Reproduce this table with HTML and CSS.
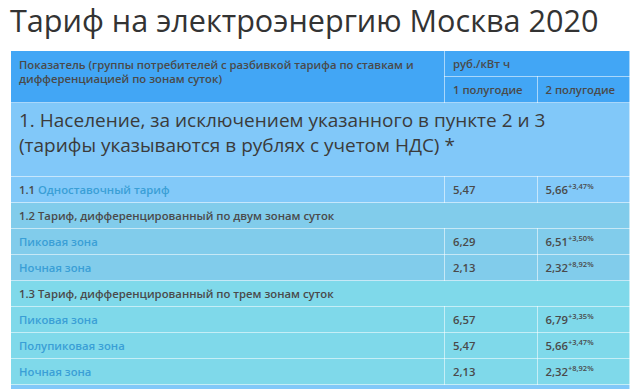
FILE: index.html
```html
<!DOCTYPE html>
<html lang="ru">
<head>
<meta charset="utf-8">
<link rel="stylesheet" href="styles.css">
</head>
<body>
<h1 class="title">Тариф на электроэнергию Москва 2020</h1>
<table class="tariff">
  <thead>
    <tr class="head">
      <th rowspan="2" class="c1">Показатель (группы потребителей с разбивкой тарифа по ставкам и дифференциацией по зонам суток)</th>
      <th colspan="2">руб./кВт ч</th>
    </tr>
    <tr class="head">
      <th class="c2">1 полугодие</th>
      <th class="c3">2 полугодие</th>
    </tr>
  </thead>
  <tbody>
    <tr class="sec">
      <td colspan="3">1. Население, за исключением указанного в пункте 2 и 3 (тарифы указываются в рублях с учетом НДС) *</td>
    </tr>
    <tr class="g1">
      <td><b>1.1</b> <a class="lnk">Одноставочный тариф</a></td>
      <td>5,47</td>
      <td>5,66<sup>+3,47%</sup></td>
    </tr>
    <tr class="g2">
      <td colspan="3"><b>1.2 Тариф, дифференцированный по двум зонам суток</b></td>
    </tr>
    <tr class="g2">
      <td><a class="lnk">Пиковая зона</a></td>
      <td>6,29</td>
      <td>6,51<sup>+3,50%</sup></td>
    </tr>
    <tr class="g2">
      <td><a class="lnk">Ночная зона</a></td>
      <td>2,13</td>
      <td>2,32<sup>+8,92%</sup></td>
    </tr>
    <tr class="g3">
      <td colspan="3"><b>1.3 Тариф, дифференцированный по трем зонам суток</b></td>
    </tr>
    <tr class="g3">
      <td><a class="lnk">Пиковая зона</a></td>
      <td>6,57</td>
      <td>6,79<sup>+3,35%</sup></td>
    </tr>
    <tr class="g3">
      <td><a class="lnk">Полупиковая зона</a></td>
      <td>5,47</td>
      <td>5,66<sup>+3,47%</sup></td>
    </tr>
    <tr class="g3">
      <td><a class="lnk">Ночная зона</a></td>
      <td>2,13</td>
      <td>2,32<sup>+8,92%</sup></td>
    </tr>
    <tr class="sec2">
      <td colspan="3"></td>
    </tr>
  </tbody>
</table>
</body>
</html>
```

FILE: styles.css
```css
html, body {
  margin: 0;
  padding: 0;
  background: #fff;
}
body {
  font-family: "Open Sans", "DejaVu Sans", sans-serif;
  color: #444;
  padding: 0 10px;
  overflow: hidden;
  height: 389px;
}
.title {
  font-size: 30.6px;
  font-weight: 400;
  color: #333;
  margin: 0;
  line-height: 40px;
  height: 50px;
}
.tariff {
  width: 620px;
  border-collapse: collapse;
  font-size: 11.3px;
  table-layout: fixed;
}
.tariff th, .tariff td {
  border: 1px solid rgba(255,255,255,0.55);
  padding: 6px 8px;
  line-height: 13px;
  text-align: left;
  vertical-align: top;
  font-weight: 600;
  color: #4a4a4a;
}
.tariff .c1 { width: 417px; padding-top: 7px; line-height: 14px; }
.tariff .c2 { width: 77px; }
.head th {
  background: #42a6f5;
}
.sec td {
  background: #81c8f9;
  font-size: 19px;
  font-weight: 400;
  line-height: 25px;
  color: #3b3b3b;
  padding: 5px 8px 18px;
}
.g1 td { background: #82c9f9; }
.g2 td { background: #81cceb; }
.g3 td { background: #7fd9ea; }
.sec2 td { background: #81c8f9; height: 30px; }
.tariff b { font-weight: 600; }
.lnk {
  color: #3a9fd6;
  text-decoration: none;
  font-weight: 600;
}
.tariff sup {
  font-size: 7.5px;
  line-height: 0;
  vertical-align: 5px;
}
```
